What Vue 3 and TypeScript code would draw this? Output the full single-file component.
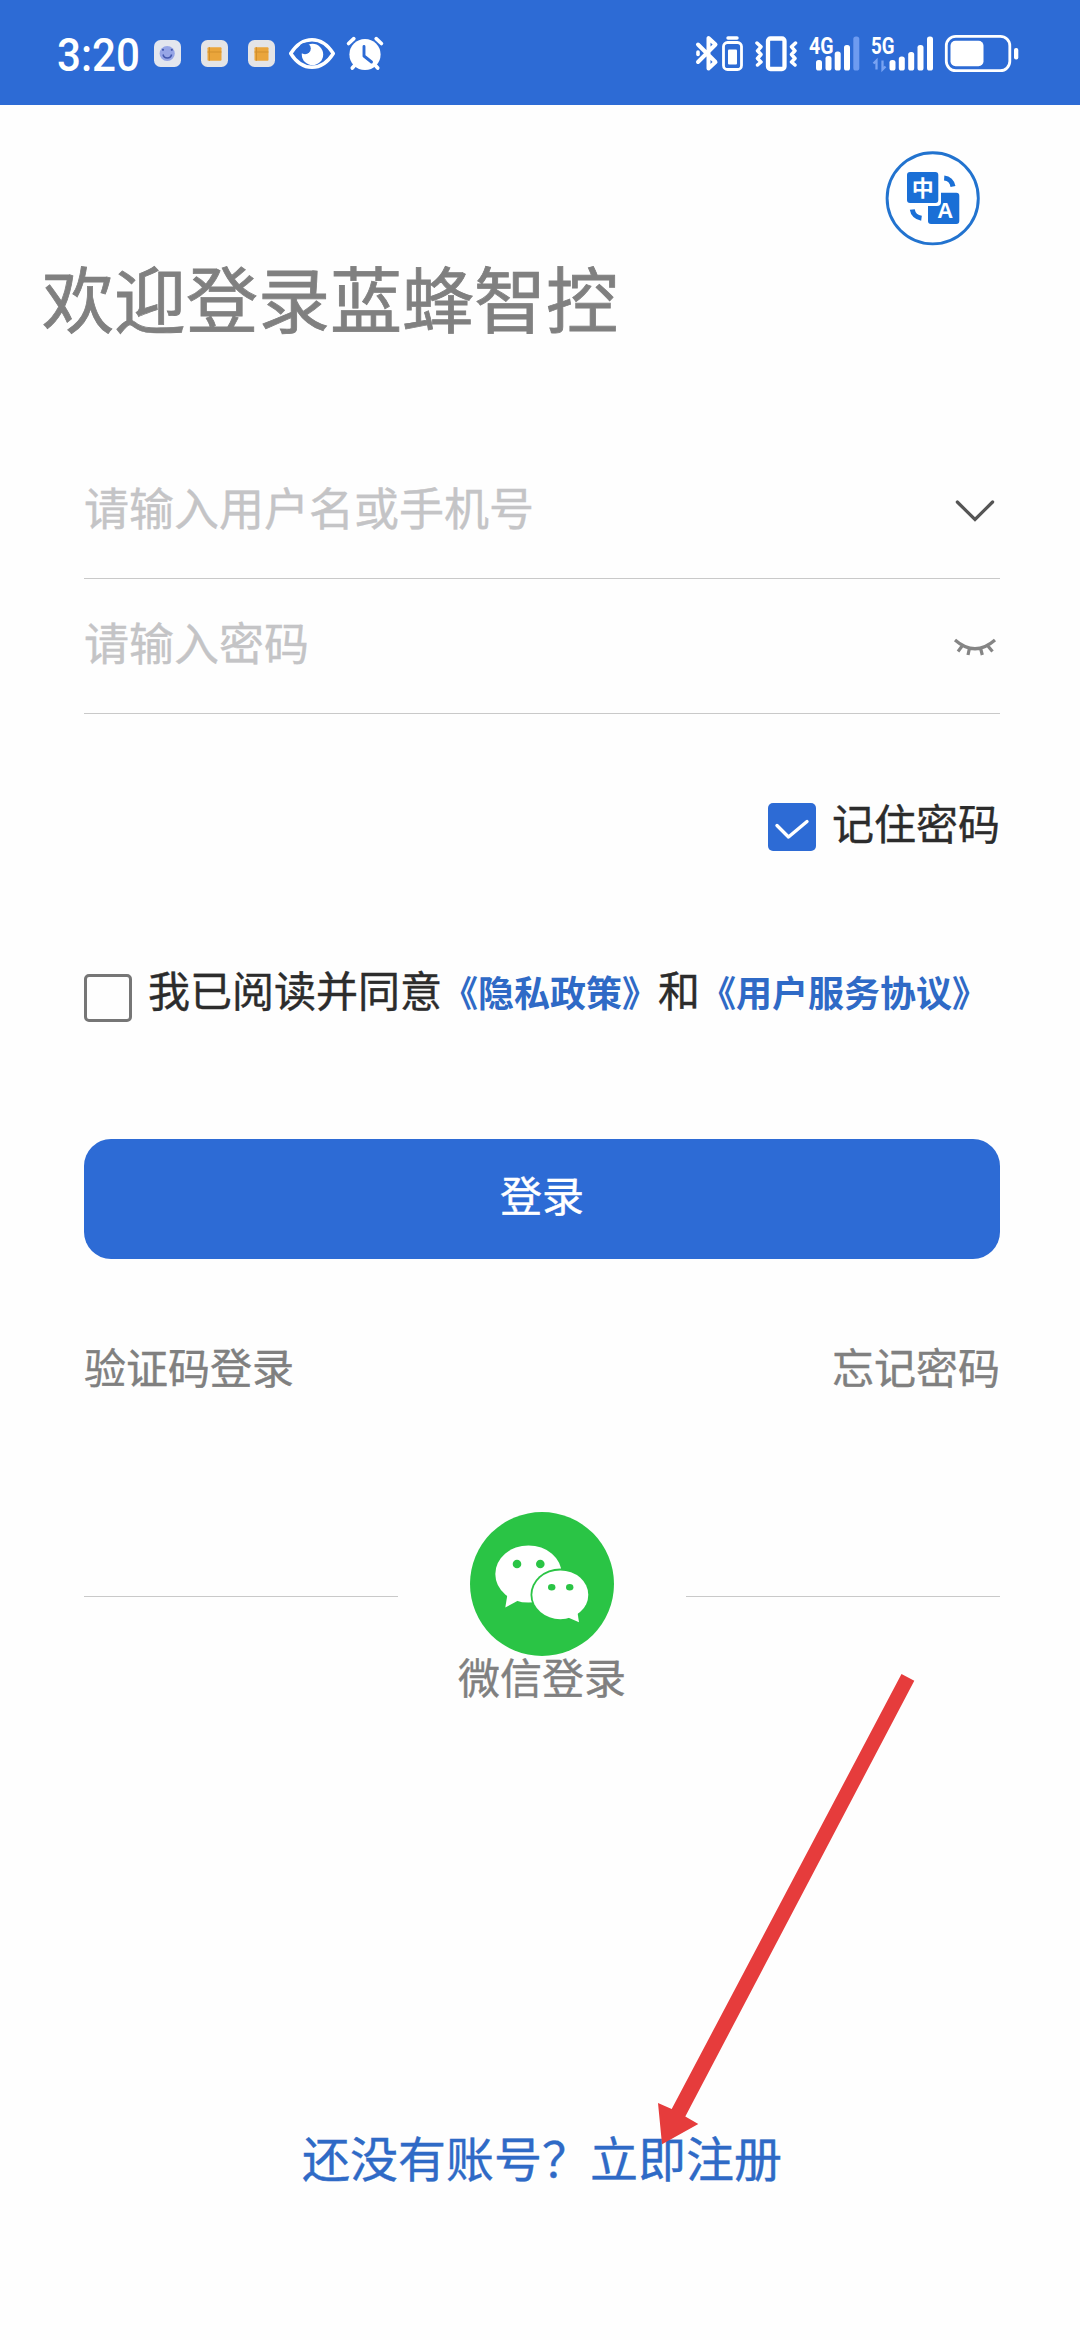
<script setup lang="ts">
import { ref } from 'vue'

interface Field {
  key: string
  hint: string
  icon: 'chevron' | 'eye'
}

const fields: Field[] = [
  { key: 'user', hint: '请输入用户名或手机号', icon: 'chevron' },
  { key: 'pass', hint: '请输入密码', icon: 'eye' },
]
const remember = ref(true)
const agreed = ref(false)

const bars4g = [
  { x: 819, y: 60 },
  { x: 828.5, y: 56 },
  { x: 837.7, y: 51.5 },
  { x: 847, y: 45 },
]
const bars5g = [
  { x: 892.5, y: 60 },
  { x: 901.8, y: 56.5 },
  { x: 911.2, y: 52 },
  { x: 920.5, y: 45 },
  { x: 930, y: 36.5 },
]
</script>

<template>
  <div class="screen">
    <header class="status">
      <div class="group">
        <svg width="100" height="105" viewBox="50 0 100 105">
          <text x="57" y="70.5" class="time" textLength="83" lengthAdjust="spacingAndGlyphs">3:20</text>
        </svg>
        <svg width="45" height="105" viewBox="150 0 45 105">
          <rect x="154" y="40" width="27" height="27" rx="6.5" fill="#e3e6ee" />
          <circle cx="167.2" cy="53.5" r="7.6" fill="#96a5e6" />
          <path d="M163 54.5a4.4 4.4 0 0 0 8.6 0" fill="none" stroke="#4358ae" stroke-width="1.5" />
          <circle cx="163" cy="49.8" r="1.1" fill="#4358ae" /><circle cx="171.8" cy="49.8" r="1.1" fill="#4358ae" />
        </svg>
        <svg v-for="n in 2" :key="n" width="47" height="105" viewBox="195 0 47 105">
          <rect x="201" y="40" width="27" height="27" rx="6.5" fill="#e4e4e6" />
          <rect x="207.5" y="47.3" width="14" height="13.4" rx="1" fill="#eaa53b" />
          <path d="M209.5 47.3v13.4M207.5 52h14" stroke="#d18f2c" stroke-width="1" />
        </svg>
        <svg width="52" height="105" viewBox="289 0 52 105">
          <path d="M290.7 53.5C297 43.5 304.5 39.700 312 39.700S327 43.5 333.300 53.5C327 63.5 319.5 67.300 312 67.300S297 63.5 290.700 53.5Z" fill="none" stroke="#fff" stroke-width="3.4" stroke-linejoin="round" />
          <circle cx="312.500" cy="54.500" r="10.700" fill="#fff" />
          <circle cx="305" cy="48.500" r="5.800" fill="#2d6bd5" />
        </svg>
        <svg width="45" height="105" viewBox="341 0 45 105">
          <circle cx="365" cy="54.5" r="15.600" fill="#fff" />
          <path d="M348.6 43.5l5.2-4.800M381.4 43.5l-5.2-4.800M352.3 68l4-4.5M377.700 68l-4-4.5" stroke="#fff" stroke-width="3.700" stroke-linecap="round" />
          <path d="M364 46.5v9.5l7.5 6" fill="none" stroke="#2d6bd5" stroke-width="2.900" stroke-linecap="round" stroke-linejoin="round" />
        </svg>
      </div>
      <div class="group">
        <svg width="54" height="105" viewBox="693 0 54 105" fill="none" stroke="#fff">
          <path d="M698 62L715.5 44.500L708.5 38V68.5L715.5 62L698 44.500" stroke-width="4" stroke-linecap="round" stroke-linejoin="round" />
          <path d="M698 52v2.500" stroke-width="3.600" stroke-linecap="round" />
          <rect x="723.5" y="42.5" width="18" height="27" rx="4" stroke-width="2.800" />
          <rect x="728" y="49.5" width="9" height="15" rx="1" fill="#fff" stroke="none" />
          <path d="M728 38h9" stroke-width="3.400" stroke-linecap="round" />
        </svg>
        <svg width="55" height="105" viewBox="747 0 55 105" fill="none" stroke="#fff">
          <rect x="768" y="38.5" width="16.5" height="30.5" rx="2.5" stroke-width="4.300" />
          <path d="M757 43l4 3.800l-3.5 4l3.5 3.700l-3.5 4l3.5 3.5l-3.5 3M795.5 43l-4 3.800l3.5 4l-3.5 3.700l3.5 4l-3.5 3.5l3.5 3" stroke-width="3.500" stroke-linecap="round" stroke-linejoin="round" />
        </svg>
        <svg width="65" height="105" viewBox="802 0 65 105">
          <text x="809" y="53.5" class="net" textLength="24.5" lengthAdjust="spacingAndGlyphs">4G</text>
          <rect v-for="b in bars4g" :key="b.x" :x="b.x - 3" :y="b.y" width="6" :height="70.5 - b.y" rx="2.600" fill="#fff" />
          <rect x="853.300" y="36.5" width="6" height="34" rx="2.600" fill="#6e9bf0" />
        </svg>
        <svg width="73" height="105" viewBox="867 0 73 105">
          <text x="871" y="53.5" class="net" textLength="23.5" lengthAdjust="spacingAndGlyphs">5G</text>
          <path d="M873.5 63.5l3-3v9M885.5 66.5l-3 3v-9" fill="none" stroke="#79a3f2" stroke-width="2.300" />
          <rect v-for="b in bars5g" :key="b.x" :x="b.x - 3" :y="b.y" width="6" :height="70.5 - b.y" rx="2.600" fill="#fff" />
        </svg>
        <svg width="84" height="105" viewBox="940 0 84 105">
          <rect x="946.300" y="36.300" width="63.5" height="34.400" rx="9.5" fill="none" stroke="#fff" stroke-width="2.800" />
          <rect x="950.5" y="40.700" width="33" height="25.600" rx="5" fill="#fff" />
          <rect x="1014" y="48" width="4.300" height="11.5" rx="2" fill="#fff" />
        </svg>
      </div>
    </header>

    <div class="lang">
      <svg width="96" height="96" viewBox="885 150 96 96">
        <circle cx="932.700" cy="198.300" r="45.600" fill="#fff" stroke="#2273cf" stroke-width="2.900" />
        <rect x="928" y="192.700" width="31.300" height="31.300" rx="3" fill="#1a6fd6" />
        <rect x="905" y="170" width="36" height="36" rx="4" fill="#fff" />
        <rect x="907" y="172" width="31.300" height="31" rx="3" fill="#1a6fd6" />
        <path d="M944.200 178c4.5.3 8 3.5 8.800 8.500M912.300 209.5c.6 4.5 4 8 9.200 8.700" fill="none" stroke="#1a6fd6" stroke-width="5" />
        <text x="922.800" y="195.800" text-anchor="middle" class="zh">中</text>
        <text x="945.200" y="217.700" text-anchor="middle" class="en">A</text>
      </svg>
    </div>

    <h1 class="title">欢迎登录蓝蜂智控</h1>

    <main class="form">
      <div v-for="f in fields" :key="f.key" class="field">
        <span class="hint">{{ f.hint }}</span>
        <svg v-if="f.icon === 'chevron'" width="50" height="40" viewBox="950 491 50 40">
          <path d="M957.300 502l17.700 17.5L992.600 502" fill="none" stroke="#555" stroke-width="3.200" stroke-linecap="round" />
        </svg>
        <svg v-else width="50" height="40" viewBox="950 626 50 40">
          <path d="M955 640q20 17.500 40 0M962.5 645.5l-4.500 6M969.5 648l-1.5 7M980.5 648l1.800 7M987.5 645.5l5 6" fill="none" stroke="#858585" stroke-width="3.200" />
        </svg>
      </div>

      <label class="remember" @click="remember = !remember">
        <span class="box" :class="{ on: remember }">
          <svg v-if="remember" width="48" height="48" viewBox="0 0 48 48">
            <path d="M9 22.500l11.500 11.500L39 18.500" fill="none" stroke="#fff" stroke-width="3.400" stroke-linecap="round" stroke-linejoin="round" />
          </svg>
        </span>
        <span class="remember-text">记住密码</span>
      </label>

      <div class="agree">
        <span class="box" :class="{ on: agreed }" @click="agreed = !agreed"></span>
        <p class="terms">我已阅读并同意<b>《隐私政策》</b>和<b>《用户服务协议》</b></p>
      </div>

      <button class="submit">登录</button>

      <div class="links">
        <span>验证码登录</span>
        <span>忘记密码</span>
      </div>

      <div class="social">
        <i class="rule"></i>
        <div class="wechat">
          <svg width="144" height="144" viewBox="470 1512 144 144">
            <circle cx="542" cy="1584" r="72" fill="#2ac445" />
            <g fill="#fff">
              <ellipse cx="528.5" cy="1574" rx="33.200" ry="28.600" />
              <path d="M507.5 1594l-2.200 13.5l12.5-6.700z" />
            </g>
            <ellipse cx="560.300" cy="1594.800" rx="29.800" ry="26.200" fill="#2ac445" />
            <g fill="#fff">
              <ellipse cx="560.300" cy="1594.800" rx="28" ry="24.400" />
              <path d="M568 1617.5l11 4.800l-1.700-11z" />
            </g>
            <g fill="#2ac445">
              <circle cx="517" cy="1564" r="4.300" />
              <circle cx="540.300" cy="1564" r="4.300" />
              <ellipse cx="551.700" cy="1587.300" rx="3.700" ry="3.300" />
              <ellipse cx="569.700" cy="1587.300" rx="3.700" ry="3.300" />
            </g>
          </svg>
          <span>微信登录</span>
        </div>
        <i class="rule"></i>
      </div>

      <p class="register">还没有账号？立即注册</p>
    </main>

    <svg class="arrow" width="260" height="480" viewBox="656 1670 260 480">
      <path d="M901.500 1674L914.300 1680.700L685.300 2116.500L698.300 2124L662 2144.300L658 2103L671.700 2109Z" fill="#e63c3c" />
    </svg>
  </div>
</template>

<style>
body {
  margin: 0;
  background: #fefefe;
}
</style>

<style scoped>
.screen {
  position: relative;
  width: 1080px;
  height: 2340px;
  overflow: hidden;
  background: #fefefe;
  font-family: "Noto Sans CJK SC", sans-serif;
  font-size: 42px;
  color: #2c2c2c;
  -webkit-text-stroke: 0.4px currentColor;
}
svg {
  display: block;
  flex: none;
  -webkit-text-stroke: 0;
}
.status {
  display: flex;
  justify-content: space-between;
  height: 105px;
  padding: 0 56px 0 50px;
  background: #2d6bd5;
}
.group {
  display: flex;
}
.time {
  font: 500 46px Roboto, sans-serif;
  fill: #fff;
}
.net {
  font: 700 23px Roboto, sans-serif;
  fill: #fff;
}
.zh {
  font: 700 22px "Noto Sans CJK SC", sans-serif;
  fill: #fff;
}
.en {
  font: 700 22px "Liberation Sans", sans-serif;
  fill: #fff;
}
.lang {
  display: flex;
  justify-content: flex-end;
  padding: 45px 99px 0 0;
}
.title {
  margin: 14px 0 0 42px;
  font-size: 72px;
  line-height: 72px;
  font-weight: 400;
  color: #808080;
  -webkit-text-stroke: 0.8px currentColor;
}
.form {
  display: flex;
  flex-direction: column;
  margin: 112px 80px 0 84px;
}
.field {
  display: flex;
  justify-content: space-between;
  align-items: center;
  box-sizing: border-box;
  height: 135px;
  border-bottom: 1px solid #c9c9c9;
}
.hint {
  padding-bottom: 9px;
  font-size: 45px;
  line-height: 45px;
  color: #c4c4c6;
}
.remember {
  display: flex;
  align-self: flex-end;
  align-items: center;
  gap: 16px;
  margin-top: 89px;
}
.box {
  flex: none;
  box-sizing: border-box;
  width: 48px;
  height: 48px;
  border: 3px solid #767676;
  border-radius: 5px;
}
.box.on {
  border: 0;
  background: #2d6bd5;
}
.remember-text {
  padding-bottom: 10px;
  line-height: 38px;
}
.agree {
  display: flex;
  align-items: flex-start;
  gap: 16px;
  margin-top: 123px;
}
.terms {
  margin: 0;
  line-height: 30px;
  white-space: nowrap;
}
.terms b {
  font-size: 36px;
  line-height: 30px;
  color: #2f6ac6;
  -webkit-text-stroke: 0;
}
.submit {
  height: 120px;
  margin-top: 117px;
  padding: 0 0 10px;
  border: 0;
  border-radius: 27px;
  background: #2d6bd5;
  color: #fff;
  font: inherit;
  line-height: 42px;
}
.links {
  display: flex;
  justify-content: space-between;
  margin-top: 86px;
  line-height: 42px;
  color: #808080;
}
.social {
  display: flex;
  justify-content: space-between;
  align-items: flex-start;
  margin-top: 125px;
}
.rule {
  width: 314px;
  height: 1px;
  margin-top: 84px;
  background: #c9c9c9;
}
.wechat {
  display: flex;
  flex-direction: column;
  align-items: center;
  line-height: 40px;
  color: #808080;
}
.register {
  margin: 436px 0 0;
  font-size: 48px;
  line-height: 48px;
  text-align: center;
  color: #2f6ac6;
}
.arrow {
  position: absolute;
  left: 656px;
  top: 1670px;
}
</style>
